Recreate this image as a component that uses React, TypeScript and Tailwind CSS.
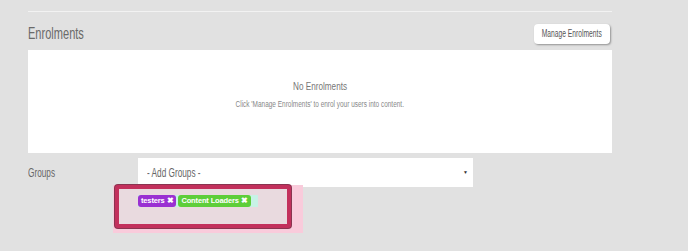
import React from 'react';

// Narrow display face isn't available offline, so Liberation Sans is squeezed horizontally.
function Narrow({ children, className = '' }: { children: React.ReactNode; className?: string }) {
  return <span className={`inline-block whitespace-nowrap leading-none ${className}`}>{children}</span>;
}

function Tag({ label, className }: { label: string; className: string }) {
  return (
    <span
      className={`flex h-[12px] items-center gap-[2px] rounded-[3px] px-[3px] text-[7.5px] font-bold leading-none tracking-[-0.15px] text-white ${className}`}
    >
      {label}
      <span className="text-[7.5px]">✖</span>
    </span>
  );
}

export default function App() {
  return (
    <div
      className="h-[251px] w-[688px] overflow-hidden bg-[#e1e1e1] pl-[28px] pt-[11px] leading-none text-[#666]"
      style={{ fontFamily: '"Liberation Sans", Arial, sans-serif' }}
    >
      <div className="w-[584px]">
        <div className="border-t border-[#f2f2f2]" />

        <div className="mt-[12px] flex h-[20px] items-start justify-between">
          <h2 className="mt-[1px] w-[60px] text-[17px] font-normal leading-none text-[#6a6a6a]">
            <Narrow className="origin-left scale-x-[0.65]">Enrolments</Narrow>
          </h2>
          <button className="mr-[2px] flex h-[20px] w-[76px] items-center justify-center rounded-[4px] bg-white text-[10px] leading-none text-[#555] shadow-[1px_1px_2px_rgba(0,0,0,0.35)]">
            <Narrow className="scale-x-[0.67]">Manage Enrolments</Narrow>
          </button>
        </div>

        <div className="mt-[6px] flex h-[103px] flex-col items-center bg-white pt-[31px]">
          <p className="text-[11.5px] leading-none text-[#777]">
            <Narrow className="scale-x-[0.71]">No Enrolments</Narrow>
          </p>
          <p className="mt-[7px] text-[8.5px] leading-none text-[#888]">
            <Narrow className="scale-x-[0.76]">Click 'Manage Enrolments' to enrol your users into content.</Narrow>
          </p>
        </div>

        <div className="mt-[5px] flex items-center">
          <span className="w-[110px] text-[13.5px] leading-none text-[#666]">
            <Narrow className="origin-left scale-x-[0.61]">Groups</Narrow>
          </span>
          <div className="flex h-[29px] w-[335px] items-center justify-between bg-white pl-[9px] pr-[5px]">
            <span className="text-[13.5px] leading-none text-[#666]">
              <Narrow className="origin-left scale-x-[0.61]">- Add Groups -</Narrow>
            </span>
            <span className="text-[5px] leading-none text-[#333]">▼</span>
          </div>
        </div>

        <div className="relative -mt-[3px] ml-[85px] h-[48px] w-[190px] bg-[#f9cbdb]">
          <div className="ml-[2px] mt-[1px] h-[43px] w-[176px] rounded-[3px] border-[4px] border-[#c2305c] bg-[#e9dadf] shadow-[0_0_0_1px_#8a3450]">
            <div className="ml-[19px] mt-[6px] flex w-fit items-center gap-[2px] bg-[#c8f2e6] pr-[7px]">
              <Tag label="testers" className="bg-[#9a30d2]" />
              <Tag label="Content Loaders" className="bg-[#5ece3a]" />
            </div>
          </div>
        </div>
      </div>
    </div>
  );
}
